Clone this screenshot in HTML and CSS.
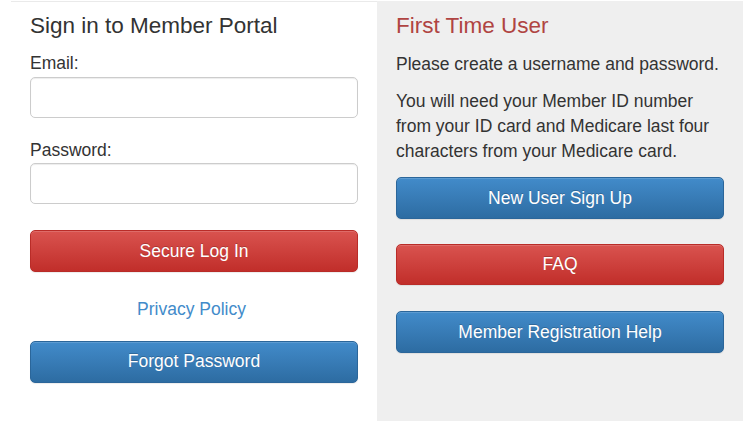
FILE: index.html
```html
<!DOCTYPE html>
<html>
<head>
<meta charset="utf-8">
<link rel="stylesheet" href="styles.css">
</head>
<body>
<div class="wrap">
  <section class="col col-login">
    <h4 class="title">Sign in to Member Portal</h4>
    <label class="lbl lbl-email" for="email">Email:</label>
    <input class="field" id="email" type="text">
    <label class="lbl lbl-pass" for="pass">Password:</label>
    <input class="field" id="pass" type="password">
    <a class="btn btn-danger btn-login" href="#">Secure Log In</a>
    <div class="privacy"><a href="#">Privacy Policy</a></div>
    <a class="btn btn-primary btn-forgot" href="#">Forgot Password</a>
  </section>
  <section class="col col-new">
    <h4 class="title title-red">First Time User</h4>
    <p class="p1">Please create a username and password.</p>
    <p class="p2">You will need your Member ID number from your ID card and Medicare last four characters from your Medicare card.</p>
    <a class="btn btn-primary btn-signup" href="#">New User Sign Up</a>
    <a class="btn btn-danger btn-gap" href="#">FAQ</a>
    <a class="btn btn-primary btn-gap2" href="#">Member Registration Help</a>
  </section>
</div>
</body>
</html>
```
FILE: styles.css
```css
* { box-sizing: border-box; }
html, body { margin: 0; padding: 0; background: #fff; }
body {
  font-family: "Liberation Sans", Arial, Helvetica, sans-serif;
  font-size: 17.5px;
  line-height: 25px;
  color: #333;
}
.wrap {
  display: grid;
  grid-template-columns: 366px 366px;
  margin: 1px 0 0 11px;
  height: 420px;
}
.col {
  padding: 0 19px;
}
.col-login {
  box-shadow: inset 0 1px 0 #eaeaea;
}
.col-new {
  background: #efefef;
}
.title {
  font-size: 22.5px;
  line-height: 25px;
  font-weight: normal;
  margin: 11.7px 0 0;
  color: #333;
}
.title-red { color: #b04442; }
.lbl {
  display: block;
  line-height: 25px;
  margin-bottom: 0.5px;
  font-weight: normal;
}
.lbl-email { margin-top: 13.7px; }
.lbl-pass { margin-top: 19.7px; }
.field {
  display: block;
  width: 100%;
  height: 41px;
  margin: 0;
  border: 1px solid #ccc;
  border-radius: 5px;
  background: #fff;
  box-shadow: inset 0 1px 1px rgba(0,0,0,.075);
  font: inherit;
  padding: 0 15px;
}
.btn {
  display: block;
  height: 41.5px;
  line-height: 25px;
  padding: 7.25px 15px;
  border: 1px solid;
  border-radius: 5px;
  text-align: center;
  text-decoration: none;
  color: #fff;
  text-shadow: 0 -1px 0 rgba(0,0,0,.2);
  box-shadow: inset 0 1px 0 rgba(255,255,255,.15), 0 1px 1px rgba(0,0,0,.075);
}
.btn-danger {
  background: linear-gradient(to bottom, #d9534f 0%, #c12e2a 100%);
  border-color: #b92c28;
}
.btn-primary {
  background: linear-gradient(to bottom, #428bca 0%, #2d6ca2 100%);
  border-color: #2b669a;
}
.btn-login { margin-top: 26.2px; }
.privacy {
  margin-top: 25.3px;
  text-align: center;
  line-height: 25px;
  padding-right: 5px;
}
.privacy a { color: #428bca; text-decoration: none; }
.btn-forgot { margin-top: 19.2px; }
.p1 { margin: 14.4px 0 0; }
.p2 { margin: 11.6px 0 0; }
.btn-signup { margin-top: 13.6px; }
.btn-gap { margin-top: 25.2px; }
.btn-gap2 { margin-top: 25.8px; }
```
